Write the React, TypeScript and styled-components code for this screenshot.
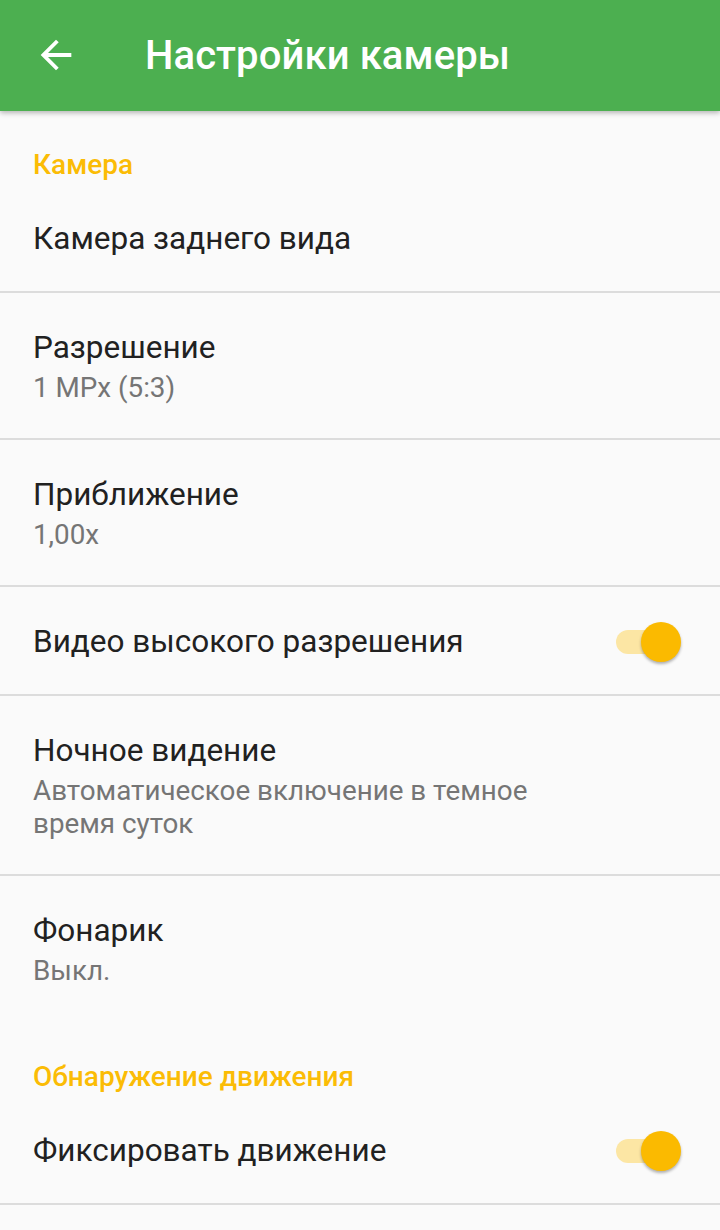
import React from "react";
import styled, { createGlobalStyle } from "styled-components";

const Global = createGlobalStyle`
  html, body { margin: 0; padding: 0; background: #fafafa; }
  body { font-family: Roboto, "Noto Sans", sans-serif; -webkit-font-smoothing: antialiased; }
  * { box-sizing: border-box; }
`;

const Page = styled.div`
  width: 720px;
  min-height: 1230px;
  background: #fafafa;
  display: flex;
  flex-direction: column;
  overflow: hidden;
`;

const AppBar = styled.header`
  height: 111px;
  background: #4caf50;
  display: flex;
  align-items: center;
  box-shadow: 0 2px 5px rgba(0, 0, 0, 0.28);
  position: relative;
  z-index: 1;
  flex-shrink: 0;
`;

const BackButton = styled.button`
  width: 46px;
  height: 46px;
  margin: 0 0 2px 33px;
  padding: 0;
  border: none;
  background: transparent;
  display: flex;
  align-items: center;
  justify-content: center;
`;

const Title = styled.h1`
  margin: 0 0 0 66px;
  color: #fff;
  font-family: Roboto, sans-serif;
  font-weight: 500;
  font-size: 40px;
  letter-spacing: 0.1px;
`;

const List = styled.main`
  display: flex;
  flex-direction: column;
`;

const Category = styled.div`
  padding: 38px 33px 3px;
  line-height: 32px;
  font-size: 28px;
  font-weight: 500;
  color: #fbbc05;
`;

const Row = styled.div<{ $divider?: boolean; $single?: boolean }>`
  display: flex;
  align-items: center;
  padding: 35px 39px ${(p) => (p.$single ? "32px" : "34px")} 33px;
  border-bottom: ${(p) => (p.$divider ? "2px solid #dcdcdc" : "2px solid transparent")};
`;

const Texts = styled.div`
  flex: 1;
  display: flex;
  flex-direction: column;
`;

const RowTitle = styled.div`
  font-size: 31.5px;
  line-height: 40px;
  color: #212121;
`;

const RowSummary = styled.div`
  margin-top: 3px;
  font-size: 27.8px;
  line-height: 33px;
  color: #757575;
  max-width: 530px;
`;

const Switch = styled.div`
  position: relative;
  width: 65px;
  height: 40px;
  flex-shrink: 0;
`;

const Track = styled.span`
  position: absolute;
  left: 0;
  top: 8px;
  width: 58px;
  height: 24px;
  border-radius: 12px;
  background: #fce6a4;
`;

const Thumb = styled.span`
  position: absolute;
  right: 0;
  top: 0;
  width: 40px;
  height: 40px;
  border-radius: 50%;
  background: #fbba00;
  box-shadow: 0 2px 3px rgba(0, 0, 0, 0.3);
`;

const BackArrow = () => (
  <svg width="46" height="46" viewBox="0 0 24 24" fill="#fff">
    <path d="M20 11H7.83l5.59-5.59L12 4l-8 8 8 8 1.41-1.41L7.83 13H20v-2z" />
  </svg>
);

type Item = { title: string; summary?: string; toggle?: boolean; divider?: boolean };

const camera: Item[] = [
  { title: "Камера заднего вида", divider: true },
  { title: "Разрешение", summary: "1 MPx (5:3)", divider: true },
  { title: "Приближение", summary: "1,00x", divider: true },
  { title: "Видео высокого разрешения", toggle: true, divider: true },
  { title: "Ночное видение", summary: "Автоматическое включение в темное время суток", divider: true },
  { title: "Фонарик", summary: "Выкл." },
];

const motion: Item[] = [{ title: "Фиксировать движение", toggle: true, divider: true }];

const PrefRow = ({ item }: { item: Item }) => (
  <Row $divider={item.divider} $single={!item.summary}>
    <Texts>
      <RowTitle>{item.title}</RowTitle>
      {item.summary && <RowSummary>{item.summary}</RowSummary>}
    </Texts>
    {item.toggle && (
      <Switch>
        <Track />
        <Thumb />
      </Switch>
    )}
  </Row>
);

export default function App() {
  return (
    <Page>
      <Global />
      <AppBar>
        <BackButton aria-label="Назад">
          <BackArrow />
        </BackButton>
        <Title>Настройки камеры</Title>
      </AppBar>
      <List>
        <Category>Камера</Category>
        {camera.map((i) => (
          <PrefRow key={i.title} item={i} />
        ))}
        <Category>Обнаружение движения</Category>
        {motion.map((i) => (
          <PrefRow key={i.title} item={i} />
        ))}
      </List>
    </Page>
  );
}
